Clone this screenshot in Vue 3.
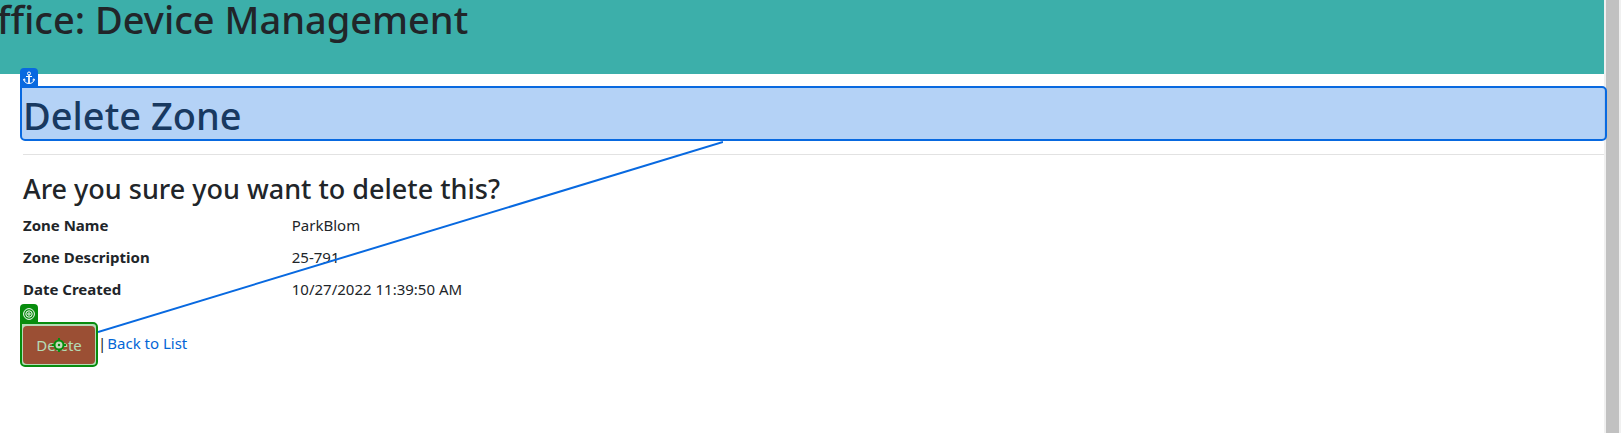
<script setup>
const fields = [
  { label: 'Zone Name', value: 'ParkBlom' },
  { label: 'Zone Description', value: '25-791' },
  { label: 'Date Created', value: '10/27/2022 11:39:50 AM' },
]
</script>

<template>
  <div class="page">
    <div class="content">
      <header class="banner">
        <h1>ffice: Device Management</h1>
      </header>
      <main>
        <div class="anchor">
          <h1>Delete Zone</h1>
          <div class="anchor-frame">
            <span class="tag">
              <svg width="12" height="14" viewBox="0 0 12 14" fill="none" stroke="#fff">
                <circle cx="6" cy="2.5" r="1.5" />
                <path d="M6 4v8.500M3 5.500h6M1 8c0 3 2 4.500 5 4.500s5-1.500 5-4.500M.3 9.500L1 7.800l1.500 1.200M11.700 9.500L11 7.800l-1.500 1.200" />
                <path d="M6 4.500v8" stroke-width="1.500" />
              </svg>
            </span>
          </div>
        </div>
        <hr />
        <h3>Are you sure you want to delete this?</h3>
        <dl>
          <template v-for="f in fields" :key="f.label">
            <dt>{{ f.label }}</dt>
            <dd>{{ f.value }}</dd>
          </template>
        </dl>
        <form class="actions" @submit.prevent>
          <div class="target">
            <button type="submit">Delete</button>
            <div class="target-frame">
              <span class="tag">
                <svg width="12" height="12" viewBox="0 0 12 12" fill="none" stroke="#fff">
                  <circle cx="6" cy="6" r="5.400" />
                  <circle cx="6" cy="6" r="3.200" />
                  <circle cx="6" cy="6" r="1.200" />
                </svg>
              </span>
              <svg class="cross" width="14" height="14" viewBox="0 0 14 14" fill="none" stroke="#078c0d" stroke-width="2">
                <circle cx="7" cy="7" r="4.500" fill="#c5d8bb" />
                <path d="M7 0v3M7 11v3M0 7h3M11 7h3" />
                <circle cx="7" cy="7" r="1.200" fill="#078c0d" stroke="none" />
              </svg>
            </div>
          </div>
          <span class="bar">|</span>
          <a href="#">Back to List</a>
        </form>
      </main>
    </div>
    <div class="scrollbar"></div>
    <svg class="link-line" width="625" height="192" viewBox="0 0 625 192">
      <path d="M0 191L625 1" stroke="#0869e0" stroke-width="2" />
    </svg>
  </div>
</template>

<style>
body {
  margin: 0;
  background: #fff;
}
</style>

<style scoped>
.page {
  position: relative;
  display: flex;
  min-height: 100vh;
  overflow: hidden;
  font-family: "Segoe UI", "Noto Sans", "Open Sans", sans-serif;
  font-size: 15px;
  line-height: 24px;
  color: #212529;
}
.content {
  flex: 1;
  min-width: 0;
}
.scrollbar {
  width: 13px;
  border: solid #f0f0f0;
  border-width: 0 2px;
  background: #c1c1c1;
}
h1,
h3 {
  margin: 0;
  font-weight: 500;
  white-space: nowrap;
}
h1 {
  font-size: 38px;
  line-height: 46px;
}
.banner {
  padding-bottom: 36px;
  background: #3cafaa;
}
.banner h1 {
  margin-left: -3px;
  line-height: 38px;
}
main {
  padding: 18px 0 0 23px;
}
.anchor {
  position: relative;
}
.anchor-frame {
  position: absolute;
  inset: -6px -3px -3px -3px;
  border: 2px solid #0869e0;
  border-radius: 0 5px 5px 5px;
  background: rgba(8, 105, 224, 0.3);
}
.tag {
  position: absolute;
  left: -2px;
  bottom: 100%;
  width: 18px;
  height: 20px;
  display: flex;
  align-items: center;
  justify-content: center;
  border-radius: 4px 4px 0 0;
  background: #0869e0;
}
hr {
  margin: 16px 0 18px;
  border: 0;
  border-top: 1px solid #e2e2e2;
}
h3 {
  font-size: 27px;
  line-height: 32px;
}
dl {
  display: grid;
  grid-template-columns: 17% 1fr;
  row-gap: 8px;
  margin: 8px 0 25px;
}
dt {
  font-weight: 700;
}
dd {
  margin: 0;
}
.actions {
  display: flex;
  align-items: flex-start;
}
.target {
  position: relative;
  margin-right: 3px;
}
button {
  display: block;
  height: 38px;
  width: 72px;
  padding: 0;
  border: 0;
  border-radius: 4px;
  background: #dc3545;
  color: #fff;
  font: inherit;
}
.target-frame {
  position: absolute;
  inset: -4px -3px -3px -3px;
  border: 2px solid #078c0d;
  border-radius: 0 5px 5px 5px;
  background: rgba(7, 140, 13, 0.3);
}
.target-frame .tag {
  background: #078c0d;
}
.cross {
  position: absolute;
  left: 50%;
  top: 50%;
  transform: translate(-50%, -50%);
}
.bar {
  margin: 5px 1px 0 0;
}
a {
  margin-top: 5px;
  color: #0366d6;
  text-decoration: none;
}
.link-line {
  position: absolute;
  left: 98px;
  top: 141px;
}
</style>
